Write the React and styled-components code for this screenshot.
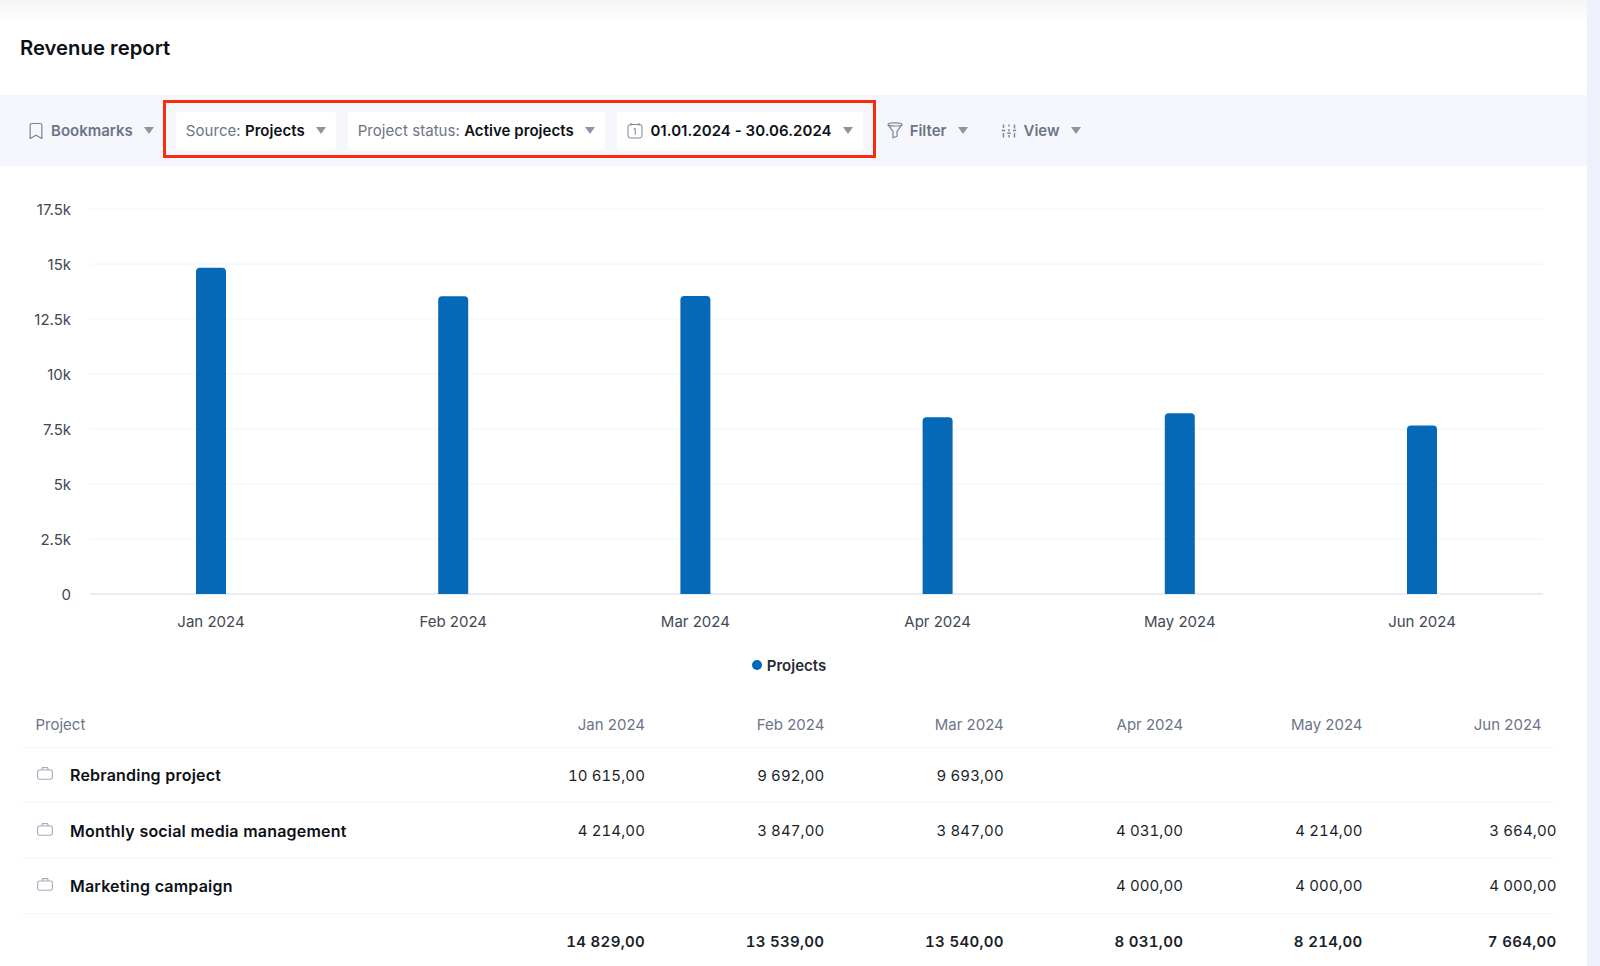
import React from 'react';
import styled, { createGlobalStyle } from 'styled-components';
import { Bookmark } from 'lucide-react';

const GlobalStyle = createGlobalStyle`
    html, body {
        margin: 0;
        padding: 0;
        height: 100%;
        background: #eef1fb;
        font-family: Inter, "Liberation Sans", sans-serif;
        overflow: hidden;
    }
`;

const Page = styled.div`
    display: flex;
    height: 966px;
    overflow: hidden;
`;

const Main = styled.main`
    width: 1587px;
    flex-shrink: 0;
    background: #fff;
    border-top-right-radius: 6px;
`;

const Header = styled.header`
    height: 95px;
    display: flex;
    align-items: center;
    padding: 0 20px;
    box-sizing: border-box;
    background: linear-gradient(#f6f6f6 0, #fff 24px);
`;

const Title = styled.h1`
    margin: 0;
    font-size: 20.3px;
    font-weight: 600;
    color: #0d1117;
`;

const Toolbar = styled.div`
    height: 71px;
    display: flex;
    align-items: center;
    padding-left: 28px;
    background: #f6f7fc;
`;

const Action = styled.div`
    display: flex;
    align-items: center;
    gap: 7px;
    font-size: 15px;
    font-weight: 600;
    color: #6c7488;
    margin-left: ${({ $gap }) => $gap || 0}px;
`;

const Caret = styled.span`
    width: 0;
    height: 0;
    border-left: 5px solid transparent;
    border-right: 5px solid transparent;
    border-top: 7px solid #8d94a6;
    margin-left: ${({ $gap }) => $gap || 3}px;
`;

const Highlight = styled.div`
    display: flex;
    align-items: center;
    gap: 12px;
    height: 58px;
    box-sizing: border-box;
    margin: 0 0 3px 9px;
    padding: 3px 10px 0;
    border: 3px solid #fb2a0e;
`;

const Chip = styled.div`
    display: flex;
    align-items: center;
    height: 38px;
    padding: 0 10px;
    border-radius: 4px;
    background: #fff;
    font-size: 15px;
    letter-spacing: 0.05px;
    color: #6c7488;
    white-space: pre;
`;

const ChipValue = styled.b`
    font-weight: 600;
    color: #0d1117;
`;

const ChartSvg = styled.svg`
    display: block;
`;

const AxisText = styled.text`
    font-size: 15px;
    fill: #3f4856;
`;

const Legend = styled.div`
    display: flex;
    align-items: center;
    justify-content: center;
    gap: 5px;
    height: 20px;
    margin-top: 19px;
    padding-right: 9px;
    font-size: 15px;
    font-weight: 600;
    color: #262c38;
`;

const LegendDot = styled.span`
    width: 10px;
    height: 10px;
    border-radius: 50%;
    background: #0569b7;
`;

const Table = styled.div`
    margin: 26px 31px 0 20px;
`;

const Row = styled.div`
    display: grid;
    grid-template-columns: 445.6px repeat(5, 179.4px) 194px;
    align-items: center;
    height: ${({ $head }) => ($head ? 47 : 55.4)}px;
    box-sizing: border-box;
    border-bottom: 1px solid #f6f7fa;
    font-size: 15px;
    font-variant-numeric: ${({ $head }) => ($head ? 'normal' : 'tabular-nums')};
    letter-spacing: ${({ $total }) => ($total ? 0.3 : 0.1)}px;
    color: ${({ $head }) => ($head ? '#6c7488' : '#1a1f2a')};
    font-weight: ${({ $total }) => ($total ? 600 : 400)};
`;

const NameCell = styled.div`
    display: flex;
    align-items: center;
    gap: 17px;
    padding-left: ${({ $head }) => ($head ? 15.5 : 17)}px;
    font-size: ${({ $head }) => ($head ? 15 : 16)}px;
    letter-spacing: ${({ $head }) => ($head ? 0 : 0.2)}px;
    font-weight: ${({ $head }) => ($head ? 400 : 600)};
    color: ${({ $head }) => ($head ? '#6c7488' : '#0d1117')};
`;

const NumCell = styled.div`
    text-align: right;
    padding-right: ${({ $inset }) => ($inset ? 15 : 0)}px;
    ${({ $plain }) => ($plain ? 'letter-spacing: 0;' : '')}
`;

const BookmarkIcon = styled(Bookmark)`
    width: 20px;
    height: 20px;
    margin: 0 -2px;
    color: #7b8396;
`;

const CaseMark = styled.svg`
    margin-top: -3px;
`;

const FunnelIcon = () => (
    <svg width="16" height="17" viewBox="0 0 16 17" fill="none" stroke="#7b8396" strokeWidth="1.2" strokeLinejoin="round">
        <ellipse cx="8" cy="2.4" rx="7" ry="1.6" />
        <path d="M1 2.6 6 9.4v6.4l4-1.6V9.4l5-6.8" />
    </svg>
);

const SlidersIcon = () => (
    <svg width="16" height="16" viewBox="0 0 16 16" fill="none" stroke="#7b8396" strokeWidth="1.4">
        <path d="M2.5 1.5v3.5M2.5 10v4.5M8 1.5v2M8 6v2.5M8 12v2.5M13.5 1.5v4M13.5 10v4.5" />
        <path d="M.8 7.5h3.4M6.3 10.2h3.4M11.8 7.5h3.4" />
    </svg>
);

const CalendarIcon = () => (
    <svg width="16" height="17" viewBox="0 0 16 17" fill="none" stroke="#7b8396" strokeWidth="1">
        <rect x="1" y="2.5" width="14" height="13.5" rx="2.5" />
        <path d="M4 1v2.5M12 1v2.5" />
        <path d="M6.6 7.4 8.2 6.2v6.6" />
    </svg>
);

const BriefcaseIcon = () => (
    <CaseMark width="16" height="13" viewBox="0 0 16 13" fill="none" stroke="#a3abbd" strokeWidth="1.1">
        <rect x="0.6" y="3" width="14.8" height="9.2" rx="1.6" />
        <path d="M5 3V1.4c0-.4.3-.8.8-.8h4.4c.5 0 .8.4.8.8V3" />
    </CaseMark>
);

const ticks = ['0', '2.5k', '5k', '7.5k', '10k', '12.5k', '15k', '17.5k'];
const months = ['Jan 2024', 'Feb 2024', 'Mar 2024', 'Apr 2024', 'May 2024', 'Jun 2024'];
const totals = [14829, 13539, 13540, 8031, 8214, 7664];

const BASE_Y = 428;
const STEP_Y = 55;

const Chart = () => (
    <ChartSvg width="1587" height="470" viewBox="0 0 1587 470">
        {ticks.map((tick, i) => (
            <g key={tick}>
                <line
                    x1="90"
                    x2="1543"
                    y1={BASE_Y - i * STEP_Y}
                    y2={BASE_Y - i * STEP_Y}
                    stroke={i === 0 ? '#e9ecf3' : '#f3f4f8'}
                    strokeWidth={i === 0 ? 2 : 1}
                />
                <AxisText x="71" y={BASE_Y - i * STEP_Y + 6} textAnchor="end">{tick}</AxisText>
            </g>
        ))}
        {totals.map((total, i) => {
            const cx = 211 + i * 242.2;
            const h = (total / 17500) * STEP_Y * 7;
            const top = BASE_Y - h;
            return (
                <g key={months[i]}>
                    <path
                        d={`M${cx - 15} ${BASE_Y}V${top + 4}q0-4 4-4h22q4 0 4 4V${BASE_Y}z`}
                        fill="#0569b7"
                    />
                    <AxisText x={cx} y={BASE_Y + 33} textAnchor="middle">{months[i]}</AxisText>
                </g>
            );
        })}
    </ChartSvg>
);

const rows = [
    { name: 'Rebranding project', values: ['10 615,00', '9 692,00', '9 693,00', '', '', ''] },
    { name: 'Monthly social media management', values: ['4 214,00', '3 847,00', '3 847,00', '4 031,00', '4 214,00', '3 664,00'] },
    { name: 'Marketing campaign', values: ['', '', '', '4 000,00', '4 000,00', '4 000,00'] },
];

const totalRow = ['14 829,00', '13 539,00', '13 540,00', '8 031,00', '8 214,00', '7 664,00'];

const App = () => (
    <Page>
        <GlobalStyle />
        <Main>
            <Header>
                <Title>Revenue report</Title>
            </Header>
            <Toolbar>
                <Action>
                    <BookmarkIcon strokeWidth={1.4} />
                    Bookmarks
                    <Caret $gap={4} />
                </Action>
                <Highlight>
                    <Chip>
                        Source: <ChipValue>Projects</ChipValue>
                        <Caret $gap={11} />
                    </Chip>
                    <Chip>
                        Project status: <ChipValue>Active projects</ChipValue>
                        <Caret $gap={11} />
                    </Chip>
                    <Chip>
                        <CalendarIcon />
                        <ChipValue>&nbsp; 01.01.2024 - 30.06.2024</ChipValue>
                        <Caret $gap={11} />
                    </Chip>
                </Highlight>
                <Action $gap={11}>
                    <FunnelIcon />
                    Filter
                    <Caret $gap={4} />
                </Action>
                <Action $gap={33}>
                    <SlidersIcon />
                    View
                    <Caret $gap={4} />
                </Action>
            </Toolbar>
            <Chart />
            <Legend>
                <LegendDot />
                Projects
            </Legend>
            <Table>
                <Row $head>
                    <NameCell $head>Project</NameCell>
                    {months.map((m, i) => (
                        <NumCell key={m} $plain $inset={i === 5}>{m}</NumCell>
                    ))}
                </Row>
                {rows.map(row => (
                    <Row key={row.name}>
                        <NameCell>
                            <BriefcaseIcon />
                            {row.name}
                        </NameCell>
                        {row.values.map((v, i) => (
                            <NumCell key={months[i]}>{v}</NumCell>
                        ))}
                    </Row>
                ))}
                <Row $total>
                    <div />
                    {totalRow.map((v, i) => (
                        <NumCell key={months[i]}>{v}</NumCell>
                    ))}
                </Row>
            </Table>
        </Main>
    </Page>
);

export default App;
